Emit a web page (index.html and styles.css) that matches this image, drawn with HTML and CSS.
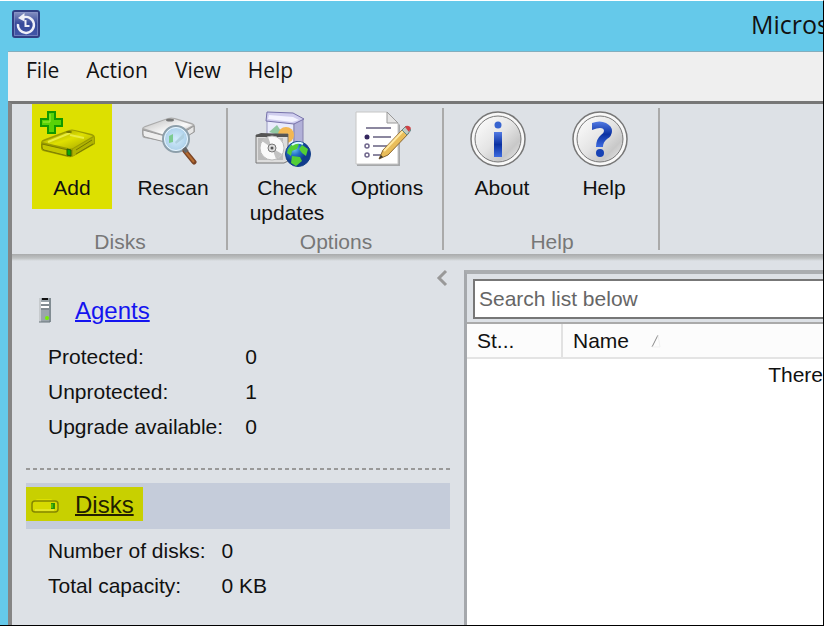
FILE: index.html
```html
<!DOCTYPE html>
<html lang="en">
<head>
<meta charset="utf-8">
<title>Backup console</title>
<link rel="stylesheet" href="styles.css">
</head>
<body>
<div class="window">
  <header class="titlebar">
    <svg class="app-icon" viewBox="0 0 28 28" aria-hidden="true">
      <defs><linearGradient id="app" x1="0" y1="0" x2="0" y2="1"><stop offset="0" stop-color="#8c96c4"/><stop offset=".5" stop-color="#354899"/><stop offset="1" stop-color="#4459aa"/></linearGradient></defs>
      <rect x="1" y="1" width="26" height="26" rx="2" fill="url(#app)" stroke="#303e83" stroke-width="2"/>
      <rect x="2.500" y="2.500" width="23" height="23" fill="none" stroke="#8d98cb" opacity=".6"/>
      <path d="M11 7.500A8 8 0 1 1 6 14" fill="none" stroke="#eff0f8" stroke-width="2.400"/>
      <path d="M12.500 3v8.500L6 8z" fill="#eff0f8"/>
      <path d="M13.500 10v6h4" fill="none" stroke="#eff0f8" stroke-width="2"/>
    </svg>
    <span class="caption">Micros</span>
  </header>

  <div class="frame">
    <nav class="menubar" aria-label="Main menu">
      <button type="button">File</button>
      <button type="button">Action</button>
      <button type="button">View</button>
      <button type="button">Help</button>
    </nav>

    <div class="client">
      <div class="ribbon">
        <section class="group" aria-labelledby="g-disks">
          <div class="tools">
            <button type="button" class="tool active">
              <svg viewBox="0 0 56 56" aria-hidden="true">
                <defs><linearGradient id="ytop" x1="0" y1="0" x2="1" y2="1"><stop offset="0" stop-color="#8e9200"/><stop offset=".5" stop-color="#dfe000"/><stop offset="1" stop-color="#a3a500"/></linearGradient></defs>
                <path d="M1 32q0-3 4-4l24-9q3-1 6 0l17 4q3 1 3 4v6L34 45q-3 2-6 1L3 40q-2-1-2-3z" fill="#9b9d00"/>
                <path d="M2 31l28-11q2-1 5 0l18 5-20 12q-2 1-5 0z" fill="url(#ytop)"/>
                <path d="M2 33l26 6v6L4 39q-2-1-2-3z" fill="#c4c700" stroke="#7b7d00"/>
                <path d="M33 38l21-12v6L33 45z" fill="#b0b300"/>
                <path d="M36 39l16-10M36 43l17-10" stroke="#777900"/>
                <path d="M8 31l22-9M30 24l14 3" stroke="#e9ec42" stroke-width="2"/>
                <ellipse cx="29" cy="21" rx="3" ry="1" fill="#717300"/>
                <path d="M27 38l4 1v6l-4-1z" fill="#08a80b" stroke="#285d00"/>
                <path d="M8 1h7v7h7v7h-7v7H8v-7H1V8h7z" fill="#58d307" stroke="#109900" stroke-width="2"/>
                <path d="M10 3v8H3" fill="none" stroke="#a3ed3a"/>
              </svg>
              <span>Add</span>
            </button>
            <button type="button" class="tool">
              <svg viewBox="0 0 56 56" aria-hidden="true">
                <defs><linearGradient id="disk" x1="0" y1="0" x2="1" y2="1"><stop offset="0" stop-color="#bbb"/><stop offset=".6" stop-color="#fafafa"/><stop offset="1" stop-color="#aaa"/></linearGradient><radialGradient id="lens"><stop offset="0" stop-color="#d3edfc"/><stop offset="1" stop-color="#a9cde8"/></radialGradient></defs>
                <path d="M1 18q0-2 3-3L27 7q3-1 7 0l17 5q3 1 3 4v5L34 32 3 27q-2-1-2-4z" fill="#aaa"/>
                <path d="M2 17L27 8q3-1 6 0l19 6-20 11q-2 1-5 0z" fill="url(#disk)"/>
                <path d="M2 19l26 7v6L4 26q-2-1-2-3z" fill="#eee" stroke="#999"/>
                <path d="M37 25l16-10v6l-16 10z" fill="#e6e6e6" stroke="#999"/>
                <ellipse cx="29" cy="9" rx="4" ry="1.500" fill="#777"/>
                <circle cx="35" cy="28" r="13" fill="url(#lens)" stroke="#8d9faa" stroke-width="2"/>
                <circle cx="35" cy="28" r="11.500" fill="none" stroke="#ebf7ff"/>
                <path d="M28 25l4-2v8l-4 1z" fill="#7dcb91"/><path d="M34 31l9-9v5l-8 6z" fill="#afcfdf"/>
                <path d="M44 40l9 11" stroke="#7b4425" stroke-width="5" stroke-linecap="round"/><path d="M44 40l9 11" stroke="#b56c32" stroke-width="2"/>
                <path d="M43 37l3 4" stroke="#666" stroke-width="4"/>
              </svg>
              <span>Rescan</span>
            </button>
          </div>
          <h2 id="g-disks">Disks</h2>
        </section>
        <section class="group" aria-labelledby="g-options">
          <div class="tools">
            <button type="button" class="tool wide">
              <svg viewBox="0 0 56 56" aria-hidden="true">
                <defs><radialGradient id="globe" cx=".35" cy=".3"><stop offset="0" stop-color="#71c7f4"/><stop offset=".5" stop-color="#236fc7"/><stop offset="1" stop-color="#103c8d"/></radialGradient></defs>
                <path d="M12 3l27 4v34H12z" fill="#e9ebfb" stroke="#9797bf"/>
                <path d="M39 10l9-2v25l-9 7z" fill="#b1b0d8" stroke="#8581ad"/>
                <path d="M12 1l26 1 11 6-10 5-28-3z" fill="#cfcdee" stroke="#7772aa"/>
                <path d="M14 4l24 2 6 3-7 2-24-3z" fill="#f3f3ff"/>
                <path d="M14 21l8-7 8 12z" fill="#91c8a2"/><circle cx="31" cy="24" r="8" fill="#f3b752"/>
                <path d="M1 24l32-1v27l-4 2H1z" fill="#ddd" stroke="#777"/>
                <path d="M1 24l5-2 27 1v3H1z" fill="#555"/><path d="M3 27h25v22H3z" fill="#bbb"/>
                <circle cx="17" cy="37" r="12" fill="#fafafa" stroke="#bbb"/>
                <path d="M17 37L7 30a12 12 0 0 1 6-4zM17 37l10 6a12 12 0 0 1-6 5z" fill="#c2c2c2"/>
                <circle cx="17" cy="37" r="4" fill="#ddd" stroke="#777"/><circle cx="17" cy="37" r="1.500" fill="#555"/>
                <circle cx="43" cy="43" r="12.500" fill="url(#globe)" stroke="#123f88"/>
                <path d="M33 38l5-6 6 1-2 5-5 2-1 5-4-3zM47 34l6 4-2 7-4-3-3-4zM37 45l8 1 2 4-6 5-5-3z" fill="#53ce35"/>
                <path d="M37 34q5-4 11-1" stroke="#d6f7ff" fill="none" stroke-width="2"/>
              </svg>
              <span>Check updates</span>
            </button>
            <button type="button" class="tool wide">
              <svg viewBox="0 0 56 56" aria-hidden="true">
                <path d="M1 1h31l12 12v41H1z" fill="#a6a8aa" transform="translate(1 1)"/>
                <path d="M1 1h31l11 11v41H1z" fill="#fff" stroke="#c6c6c6"/>
                <path d="M32 1v11h11z" fill="#e4e4e4" stroke="#999"/>
                <g stroke="#656080" stroke-width="1.500"><path d="M11 17h25M18 26h18M18 35h14M18 44h9"/></g>
                <circle cx="12" cy="26" r="2.500" fill="#34275f"/><g fill="#fff" stroke="#70678c" stroke-width="1.500"><circle cx="12" cy="35" r="2"/><circle cx="12" cy="44" r="2"/></g>
                <path d="M24 48l4-9 21-22 5 5-21 22z" fill="#e9bd5a" stroke="#8b6630"/>
                <path d="M29 40l20-21" stroke="#ffe8a0" stroke-width="2"/>
                <path d="M24 48l2-4 2 2z" fill="#333"/>
                <path d="M47 19l4-4 5 4-4 5z" fill="#bdccc5" stroke="#688"/><path d="M50 16q3-3 6 1l-2 4z" fill="#cf4246"/>
              </svg>
              <span>Options</span>
            </button>
          </div>
          <h2 id="g-options">Options</h2>
        </section>
        <section class="group" aria-labelledby="g-help">
          <div class="tools">
            <button type="button" class="tool wide">
              <svg viewBox="0 0 56 56" aria-hidden="true">
                <defs><linearGradient id="orb" x1="0" y1="0" x2="1" y2="1"><stop offset="0" stop-color="#fff"/><stop offset=".48" stop-color="#e5e5e5"/><stop offset=".75" stop-color="#c8c8c8"/><stop offset="1" stop-color="#eee"/></linearGradient><linearGradient id="ink" x1="0" y1="0" x2="0" y2="1"><stop offset="0" stop-color="#527ae3"/><stop offset=".5" stop-color="#0b31a2"/><stop offset="1" stop-color="#3d6be0"/></linearGradient></defs>
                <circle cx="28" cy="28" r="27" fill="#f8f8f8" stroke="#777" stroke-width="1.500"/><circle cx="28" cy="28" r="23" fill="url(#orb)" stroke="#777"/>
                <circle cx="28" cy="14" r="3.500" fill="#3764d0"/><path d="M24 21h8v25h-8z" fill="url(#ink)"/>
              </svg>
              <span>About</span>
            </button>
            <button type="button" class="tool wide">
              <svg viewBox="0 0 56 56" aria-hidden="true">
                <circle cx="28" cy="28" r="27" fill="#f8f8f8" stroke="#777" stroke-width="1.500"/><circle cx="28" cy="28" r="23" fill="url(#orb)" stroke="#777"/>
                <path d="M20 12q8-3 14 0 6 3 6 8 0 5-5 8-4 3-4 8h-7q0-8 5-12 3-2 3-4 0-3-4-3-3 0-8 2z" fill="url(#ink)"/><circle cx="28" cy="42" r="4" fill="#1742b5"/>
              </svg>
              <span>Help</span>
            </button>
          </div>
          <h2 id="g-help">Help</h2>
        </section>
      </div>

      <div class="workspace">
        <aside class="sidebar">
          <button type="button" class="collapse" aria-label="Collapse panel">
            <svg viewBox="0 0 12 18" aria-hidden="true"><path d="M10 2L3 9l7 7" fill="none" stroke="#999" stroke-width="3"/></svg>
          </button>
          <section class="panel agents">
            <div class="panel-head">
              <a href="#agents">
                <svg viewBox="0 0 32 28" aria-hidden="true">
                  <path d="M12 2h12v24H12z" fill="#9ba5ab"/><path d="M12 2h2v24h-2z" fill="#c7cbce"/><path d="M23 2v24H12" fill="none" stroke="#69747a"/>
                  <path d="M15 3h6" stroke="#111" stroke-width="2"/><path d="M14 7h8M14 11h8" stroke="#fff" stroke-width="2"/><path d="M14 9h8M14 13h8" stroke="#687177"/><circle cx="20" cy="22" r="2" fill="#75ef00"/>
                </svg>
                <span>Agents</span>
              </a>
            </div>
            <dl>
              <dt>Protected:</dt><dd>0</dd>
              <dt>Unprotected:</dt><dd>1</dd>
              <dt>Upgrade available:</dt><dd>0</dd>
            </dl>
          </section>
          <section class="panel disks">
            <div class="panel-head selected">
              <a href="#disks">
                <svg viewBox="0 0 32 28" aria-hidden="true">
                  <path d="M10 9h14l6 4H5z" fill="#dde000"/>
                  <rect x="5" y="11" width="26" height="11" rx="3" fill="#d7da00" stroke="#858700" stroke-width="1.500"/><path d="M8 20h19" stroke="#eff04a"/><path d="M24 13h4v6h-4z" fill="#2b8f0a"/><path d="M25 14v4" stroke="#73e800"/>
                </svg>
                <span>Disks</span>
              </a>
            </div>
            <dl>
              <dt>Number of disks:</dt><dd>0</dd>
              <dt>Total capacity:</dt><dd>0 KB</dd>
            </dl>
          </section>
        </aside>

        <main class="list">
          <div class="search"><input type="text" aria-label="Search list below" placeholder="Search list below"></div>
          <table>
            <thead>
              <tr>
                <th class="state" scope="col">St...</th>
                <th scope="col">Name <svg class="sort" viewBox="0 0 10 14" aria-hidden="true"><path d="M1 13L7 1" fill="none" stroke="#888"/><path d="M7 1l2 12H1" fill="none" stroke="#f1f1f1"/></svg></th>
              </tr>
            </thead>
            <tbody>
              <tr><td colspan="2">There</td></tr>
            </tbody>
          </table>
        </main>
      </div>
    </div>
  </div>
</div>
</body>
</html>
```

FILE: styles.css
```css
* {
  box-sizing: border-box;
}

body {
  margin: 0;
  font: 21px/25px "Liberation Sans", Arial, sans-serif;
  color: #111;
}

button {
  padding: 0;
  border: 0;
  background: none;
  color: inherit;
  font: inherit;
}

.window {
  display: flex;
  flex-direction: column;
  height: 100vh;
  overflow: hidden;
  border-top: 1px solid #fff;
  border-right: 1px solid #000;
  border-bottom: 1px solid #000;
  background: #65c9ea;
}

.titlebar {
  display: flex;
  flex: none;
  align-items: center;
  justify-content: space-between;
  height: 50px;
  padding: 0 0 4px 12px;
}

.app-icon {
  width: 28px;
  height: 28px;
}

.caption {
  width: 72px;
  font: 25px/36px "Open Sans", "Noto Sans", sans-serif;
  white-space: nowrap;
}

.frame {
  display: flex;
  flex: 1;
  flex-direction: column;
  min-height: 0;
  margin-left: 8px;
}

.menubar {
  display: flex;
  flex: none;
  gap: 27px;
  height: 50px;
  padding: 4px 18px 17px;
  border-top: 1px solid #84aebd;
  background: #efefef;
  font: 21px/28px "Open Sans", "Noto Sans", sans-serif;
}

.client {
  display: flex;
  flex: 1;
  flex-direction: column;
  min-height: 0;
  border-top: 3px solid #777;
  border-left: 4px solid #858585;
  background: #dde1e6;
}

.ribbon {
  display: flex;
  flex: none;
  height: 157px;
  padding-bottom: 7px;
  background: linear-gradient(#a9abac, #bfc2c3 60%, #dde1e6) bottom / 100% 7px no-repeat;
}

.group {
  display: flex;
  flex-direction: column;
  width: 216px;
  padding: 0 4px;
  background: linear-gradient(#aaa, #aaa) right 4px / 2px 142px no-repeat;
}

.tools {
  display: flex;
  flex: 1;
}

.tool {
  display: flex;
  flex-direction: column;
  align-items: center;
  width: 80px;
  height: 105px;
  padding-top: 7px;
}

.tool svg {
  flex: none;
  width: 56px;
  height: 56px;
  margin: 0 8px 8px 0;
}

.tool.wide {
  width: 100px;
}

.group:nth-child(1) .tools {
  gap: 21px;
  padding-left: 16px;
}

.group:nth-child(2) .tools {
  padding-left: 5px;
}

.group:nth-child(3) .tools {
  gap: 2px;
  padding-left: 4px;
}

.active {
  background: #dde000;
}

.group h2 {
  margin: 0;
  color: #777;
  font-size: 21px;
  font-weight: 400;
  line-height: 25px;
  text-align: center;
}

.workspace {
  display: flex;
  flex: 1;
  min-height: 0;
}

.sidebar {
  position: relative;
  flex: none;
  width: 452px;
  padding: 28px 14px 0;
}

.collapse {
  position: absolute;
  top: 8px;
  right: 16px;
  width: 12px;
  height: 18px;
}

.collapse svg {
  display: block;
}

.panel-head {
  display: flex;
  align-items: flex-start;
  height: 46px;
  padding: 4px 0;
}

.panel-head a {
  display: flex;
  gap: 16px;
  align-items: center;
  height: 34px;
  padding: 0 9px 0 1px;
  color: #1414f0;
  font-size: 24px;
  text-decoration: none;
}

.panel-head a span {
  text-decoration: underline;
  text-decoration-thickness: 2px;
}

.panel-head svg {
  width: 32px;
  height: 28px;
}

.selected {
  background: #c5ccda;
}

.panel-head.selected a {
  background: #c8d000;
  color: #221f00;
}

.panel dl {
  display: grid;
  grid-template-columns: max-content auto;
  column-gap: 16px;
  margin: 0;
  padding: 4px 22px;
  line-height: 35px;
}

.panel dd {
  margin: 0;
}

.agents {
  padding-bottom: 20px;
}

.agents dl {
  column-gap: 22px;
}

.disks {
  padding-top: 15px;
  background: repeating-linear-gradient(90deg, #999 0 4px, transparent 4px 7px) top / 100% 2px no-repeat;
}

.list {
  flex: 1;
  min-width: 0;
  margin-top: 9px;
  border-top: 4px solid #aaadb0;
  border-left: 3px solid #a5a8ac;
  background: #fff;
}

.search {
  height: 50px;
  padding: 5px 0 5px 6px;
  border-bottom: 2px solid #aaa;
  background: #dde1e6;
}

.search input {
  display: block;
  width: 100%;
  height: 40px;
  padding: 0 4px;
  border: 2px solid #777;
  border-right: 0;
  border-radius: 0;
  background: #fff;
  font: inherit;
}

.search input::placeholder {
  color: #666;
  opacity: 1;
}

table {
  width: 100%;
  border-collapse: collapse;
  table-layout: fixed;
}

th {
  height: 34px;
  padding: 0 10px;
  border-bottom: 2px solid #e4e4e4;
  background: #fcfcfc;
  font-weight: 400;
  text-align: left;
}

.state {
  width: 95px;
  border-right: 2px solid #e2e2e2;
}

.sort {
  width: 10px;
  height: 14px;
  margin-left: 16px;
}

td {
  height: 32px;
  padding: 0;
  text-align: right;
}
```
